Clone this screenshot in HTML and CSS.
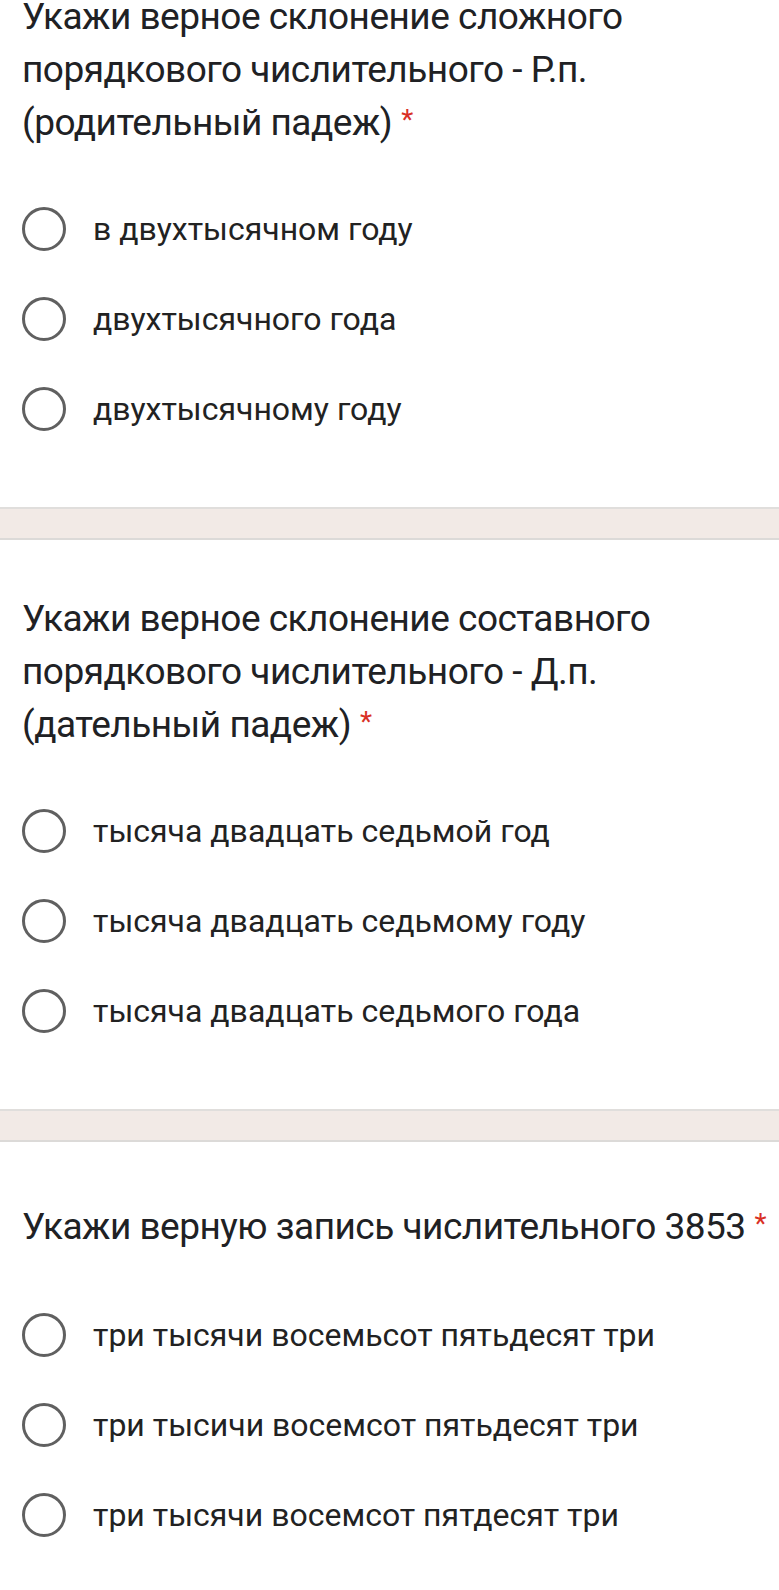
FILE: index.html
```html
<!DOCTYPE html>
<html lang="ru">
<head>
<meta charset="utf-8">
<link rel="stylesheet" href="styles.css">
</head>
<body>
<div class="page">
  <section class="question first">
    <div class="title">Укажи верное склонение сложного порядкового числительного - Р.п. (родительный падеж)<span class="req">*</span></div>
    <div class="options">
      <div class="option"><span class="radio"></span><span class="label">в двухтысячном году</span></div>
      <div class="option"><span class="radio"></span><span class="label">двухтысячного года</span></div>
      <div class="option"><span class="radio"></span><span class="label">двухтысячному году</span></div>
    </div>
  </section>
  <div class="band"></div>
  <section class="question">
    <div class="title">Укажи верное склонение составного порядкового числительного - Д.п. (дательный падеж)<span class="req">*</span></div>
    <div class="options">
      <div class="option"><span class="radio"></span><span class="label">тысяча двадцать седьмой год</span></div>
      <div class="option"><span class="radio"></span><span class="label">тысяча двадцать седьмому году</span></div>
      <div class="option"><span class="radio"></span><span class="label">тысяча двадцать седьмого года</span></div>
    </div>
  </section>
  <div class="band"></div>
  <section class="question single">
    <div class="title">Укажи верную запись числительного 3853<span class="req">*</span></div>
    <div class="options">
      <div class="option"><span class="radio"></span><span class="label">три тысячи восемьсот пятьдесят три</span></div>
      <div class="option"><span class="radio"></span><span class="label">три тысичи восемсот пятьдесят три</span></div>
      <div class="option"><span class="radio"></span><span class="label">три тысячи восемсот пятдесят три</span></div>
    </div>
  </section>
</div>
</body>
</html>
```
FILE: styles.css
```css
html, body {
  margin: 0;
  padding: 0;
  background: #ffffff;
}
body {
  font-family: Roboto, "Liberation Sans", sans-serif;
  color: #202124;
  overflow: hidden;
}
.page {
  margin-top: -10px;
}
.question {
  padding: 52px 0 53px 22px;
}
.question.first {
  padding-top: 0;
}
.question.single {
  padding-top: 58px;
}
.title {
  font-size: 37px;
  line-height: 53px;
  letter-spacing: -0.5px;
  color: #202124;
  padding-right: 10px;
}
.single .title {
  padding-right: 0;
}
.req {
  color: #d93025;
  font-size: 28px;
  line-height: 0;
  margin-left: 9px;
  vertical-align: 6px;
}
.options {
  margin-top: 35px;
  display: flex;
  flex-direction: column;
}
.single .options {
  margin-top: 37px;
}
.option {
  height: 90px;
  display: flex;
  align-items: center;
}
.radio {
  width: 38px;
  height: 38px;
  border: 3px solid #606060;
  border-radius: 50%;
  flex: none;
}
.label {
  margin-left: 27px;
  font-size: 32px;
  color: #222222;
}
.band {
  height: 29px;
  background: #f2eae6;
  border-top: 2px solid #e0dedc;
  border-bottom: 2px solid #dcdad8;
}
```
